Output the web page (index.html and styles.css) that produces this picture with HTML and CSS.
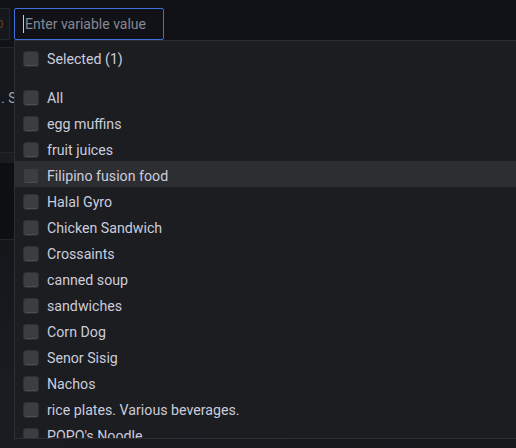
FILE: index.html
```html
<!DOCTYPE html>
<html>
<head>
<meta charset="utf-8">
<link rel="stylesheet" href="styles.css">
</head>
<body>
<div class="bg">
  <div class="toolbar"><div class="tb-btn"><span class="tb-mark"></span></div></div>
  <div class="panel-a"><span class="stub">. S</span></div>
  <div class="panel-b"></div>
  <div class="panel-c"></div>
  <div class="panel-d"></div>
</div>

<div class="picker">
  <div class="input"><span class="caret"></span><span class="placeholder">Enter variable value</span></div>
  <div class="menu">
    <div class="row"><span class="cb"></span><span>Selected (1)</span></div>
    <div class="list">
      <div class="row"><span class="cb"></span><span>All</span></div>
      <div class="row"><span class="cb"></span><span>egg muffins</span></div>
      <div class="row"><span class="cb"></span><span>fruit juices</span></div>
      <div class="row hover"><span class="cb"></span><span>Filipino fusion food</span></div>
      <div class="row"><span class="cb"></span><span>Halal Gyro</span></div>
      <div class="row"><span class="cb"></span><span>Chicken Sandwich</span></div>
      <div class="row"><span class="cb"></span><span>Crossaints</span></div>
      <div class="row"><span class="cb"></span><span>canned soup</span></div>
      <div class="row"><span class="cb"></span><span>sandwiches</span></div>
      <div class="row"><span class="cb"></span><span>Corn Dog</span></div>
      <div class="row"><span class="cb"></span><span>Senor Sisig</span></div>
      <div class="row"><span class="cb"></span><span>Nachos</span></div>
      <div class="row"><span class="cb"></span><span>rice plates. Various beverages.</span></div>
      <div class="row"><span class="cb"></span><span>POPO's Noodle</span></div>
    </div>
  </div>
</div>
</body>
</html>
```

FILE: styles.css
```css
* { box-sizing: border-box; }
html, body {
  margin: 0;
  padding: 0;
  width: 516px;
  height: 448px;
  overflow: hidden;
  background: #111217;
  font-family: Roboto, "Liberation Sans", sans-serif;
  font-size: 14px;
  color: #ccccdc;
}
.bg {
  display: flex;
  flex-direction: column;
  height: 448px;
}
.toolbar {
  height: 48px;
  padding-top: 8px;
  border-bottom: 1px solid #24262b;
  background: #111217;
}
.tb-btn {
  width: 10px;
  height: 32px;
  border: 1px solid #25272c;
  border-left: none;
  background: #15171b;
  padding-top: 11px;
}
.tb-mark {
  display: block;
  width: 3px;
  height: 8px;
  border-radius: 0 3px 3px 0;
  border: 1px solid #5e432a;
  border-left: none;
}
.panel-a {
  height: 105px;
  background: #16181c;
  border-bottom: 1px solid #23252a;
  padding-top: 40px;
  padding-left: 1px;
}
.stub {
  color: #9aa3b2;
  font-size: 14px;
  white-space: nowrap;
  line-height: 20px;
}
.panel-b {
  height: 10px;
  background: #1a1c20;
}
.panel-c {
  height: 77px;
  background: #0e0f13;
  border-bottom: 1px solid #24262b;
}
.panel-d {
  flex: 1;
  background: linear-gradient(160deg, #14161a 0%, #1a1c21 40%, #16181c 100%);
}

.picker {
  position: absolute;
  left: 14px;
  top: 8px;
}
.input {
  width: 150px;
  height: 32px;
  border: 1px solid #3d71d9;
  border-radius: 2px;
  background: #111217;
  display: flex;
  align-items: center;
  padding-left: 8px;
}
.caret {
  width: 1px;
  height: 18px;
  background: #ccccdc;
  margin-right: 1px;
}
.placeholder {
  color: #868791;
  font-size: 14px;
  white-space: nowrap;
}
.menu {
  width: 520px;
  height: 399px;
  background: #1b1d21;
  border: 1px solid #2c2e33;
  padding-top: 3px;
  overflow: hidden;
}
.list {
  margin-top: 13px;
}
.row {
  height: 26px;
  padding-top: 4px;
  padding-left: 8px;
  display: flex;
  align-items: center;
  gap: 8px;
  white-space: nowrap;
  font-size: 14.2px;
}
.row.hover {
  background: #2d2e32;
}
.cb {
  width: 16px;
  height: 16px;
  border-radius: 3px;
  background: #3c3d41;
  border: 1px solid #2e2f33;
  box-shadow: inset 0 -1px 0 #4c4d51;
  flex: none;
}
```
